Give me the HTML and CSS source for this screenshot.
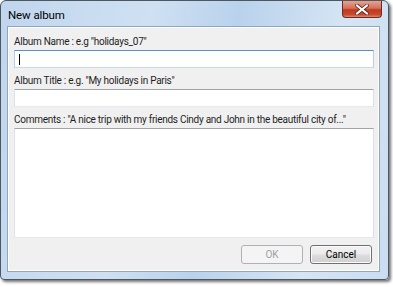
FILE: index.html
```html
<!DOCTYPE html>
<html>
<head>
<meta charset="utf-8">
<link rel="stylesheet" href="styles.css">
</head>
<body>
<div class="window">
  <div class="titlebar">
    <span class="title">New album</span>
    <div class="close">
      <svg width="14" height="11" viewBox="0 0 14 11"><path d="M2 1.5 L12 9.5 M12 1.5 L2 9.5" stroke="#5a2a20" stroke-width="3.6" stroke-linecap="square"/><path d="M2 1.5 L12 9.5 M12 1.5 L2 9.5" stroke="#ffffff" stroke-width="2" stroke-linecap="square"/></svg>
    </div>
  </div>
  <div class="client">
    <div class="field">
      <div class="label">Album Name : e.g "holidays_07"</div>
      <div class="input focused"><span class="caret"></span></div>
    </div>
    <div class="field">
      <div class="label">Album Title : e.g. "My holidays in Paris"</div>
      <div class="input"></div>
    </div>
    <div class="field">
      <div class="label">Comments : "A nice trip with my friends Cindy and John in the beautiful city of..."</div>
      <div class="input area"></div>
    </div>
    <div class="buttons">
      <div class="btn disabled">OK</div>
      <div class="btn default">Cancel</div>
    </div>
  </div>
</div>
</body>
</html>
```

FILE: styles.css
```css
html, body {
  margin: 0;
  padding: 0;
  background: #ffffff;
}
body {
  width: 393px;
  height: 287px;
  overflow: hidden;
  font-family: "Roboto", "Liberation Sans", sans-serif;
}
.window {
  width: 387px;
  height: 278px;
  border: 1px solid #4e5660;
  border-radius: 6px 6px 4px 4px;
  background: linear-gradient(100deg, #c0d6ee 0%, #cfe0f2 35%, #b9d2ec 55%, #d6e5f4 80%, #c9dcf1 100%);
  box-shadow: 2px 2px 3px rgba(0,0,0,0.55);
  display: flex;
  flex-direction: column;
  box-sizing: content-box;
}
.titlebar {
  height: 25px;
  display: flex;
  align-items: flex-start;
}
.title {
  margin: 7px 0 0 7px;
  font-size: 11.5px;
  line-height: 14px;
  color: #000;
  letter-spacing: -0.1px;
}
.close {
  margin-left: auto;
  margin-right: 6px;
  width: 40px;
  height: 17px;
  border: 1px solid #6b2b22;
  border-top: none;
  border-radius: 0 0 4px 4px;
  background: linear-gradient(#e6a394 0%, #d6705a 45%, #c0391f 55%, #c84a2f 85%, #e08a6e 100%);
  display: flex;
  align-items: center;
  justify-content: center;
  box-sizing: border-box;
}
.client {
  margin: 0 8px 0 6px;
  height: 246px;
  background: #f0f0f0;
  border: 1px solid #8fa6be;
  box-shadow: inset 0 0 0 1px #ffffff;
  box-sizing: border-box;
  padding: 8px 5px 0 6px;
  display: flex;
  flex-direction: column;
}
.field {
  display: flex;
  flex-direction: column;
}
.label {
  font-size: 10px;
  line-height: 14px;
  letter-spacing: -0.27px;
  color: #1e1e1e;
  margin-bottom: 1px;
  white-space: nowrap;
}
.input {
  height: 18px;
  background: #ffffff;
  border: 1px solid #abadb3;
  border-top-color: #a0a4aa;
  border-left-color: #e2e3ea;
  border-right-color: #dbdfe6;
  border-bottom-color: #e3e9ef;
  box-sizing: border-box;
  margin-bottom: 6px;
  position: relative;
}
.input.focused {
  border-color: #5793c9;
  border-left-color: #b5cfe7;
  border-right-color: #b5cfe7;
  border-bottom-color: #c5daed;
}
.caret {
  position: absolute;
  left: 4px;
  top: 3px;
  width: 1px;
  height: 11px;
  background: #000;
}
.input.area {
  height: 110px;
  margin-bottom: 7px;
}
.buttons {
  display: flex;
  justify-content: flex-end;
  gap: 7px;
  margin-right: 2px;
}
.btn {
  width: 62px;
  height: 19px;
  box-sizing: border-box;
  border-radius: 3px;
  font-size: 10px;
  line-height: 17px;
  text-align: center;
}
.btn.disabled {
  border: 1px solid #adb2b5;
  background: #f4f4f4;
  color: #a0a0a0;
}
.btn.default {
  border: 1px solid #707070;
  background: linear-gradient(#f2f2f2 0%, #ebebeb 48%, #dddddd 52%, #cfcfcf 100%);
  box-shadow: inset 0 0 0 1px #fcfcfc;
  color: #000;
}
```
